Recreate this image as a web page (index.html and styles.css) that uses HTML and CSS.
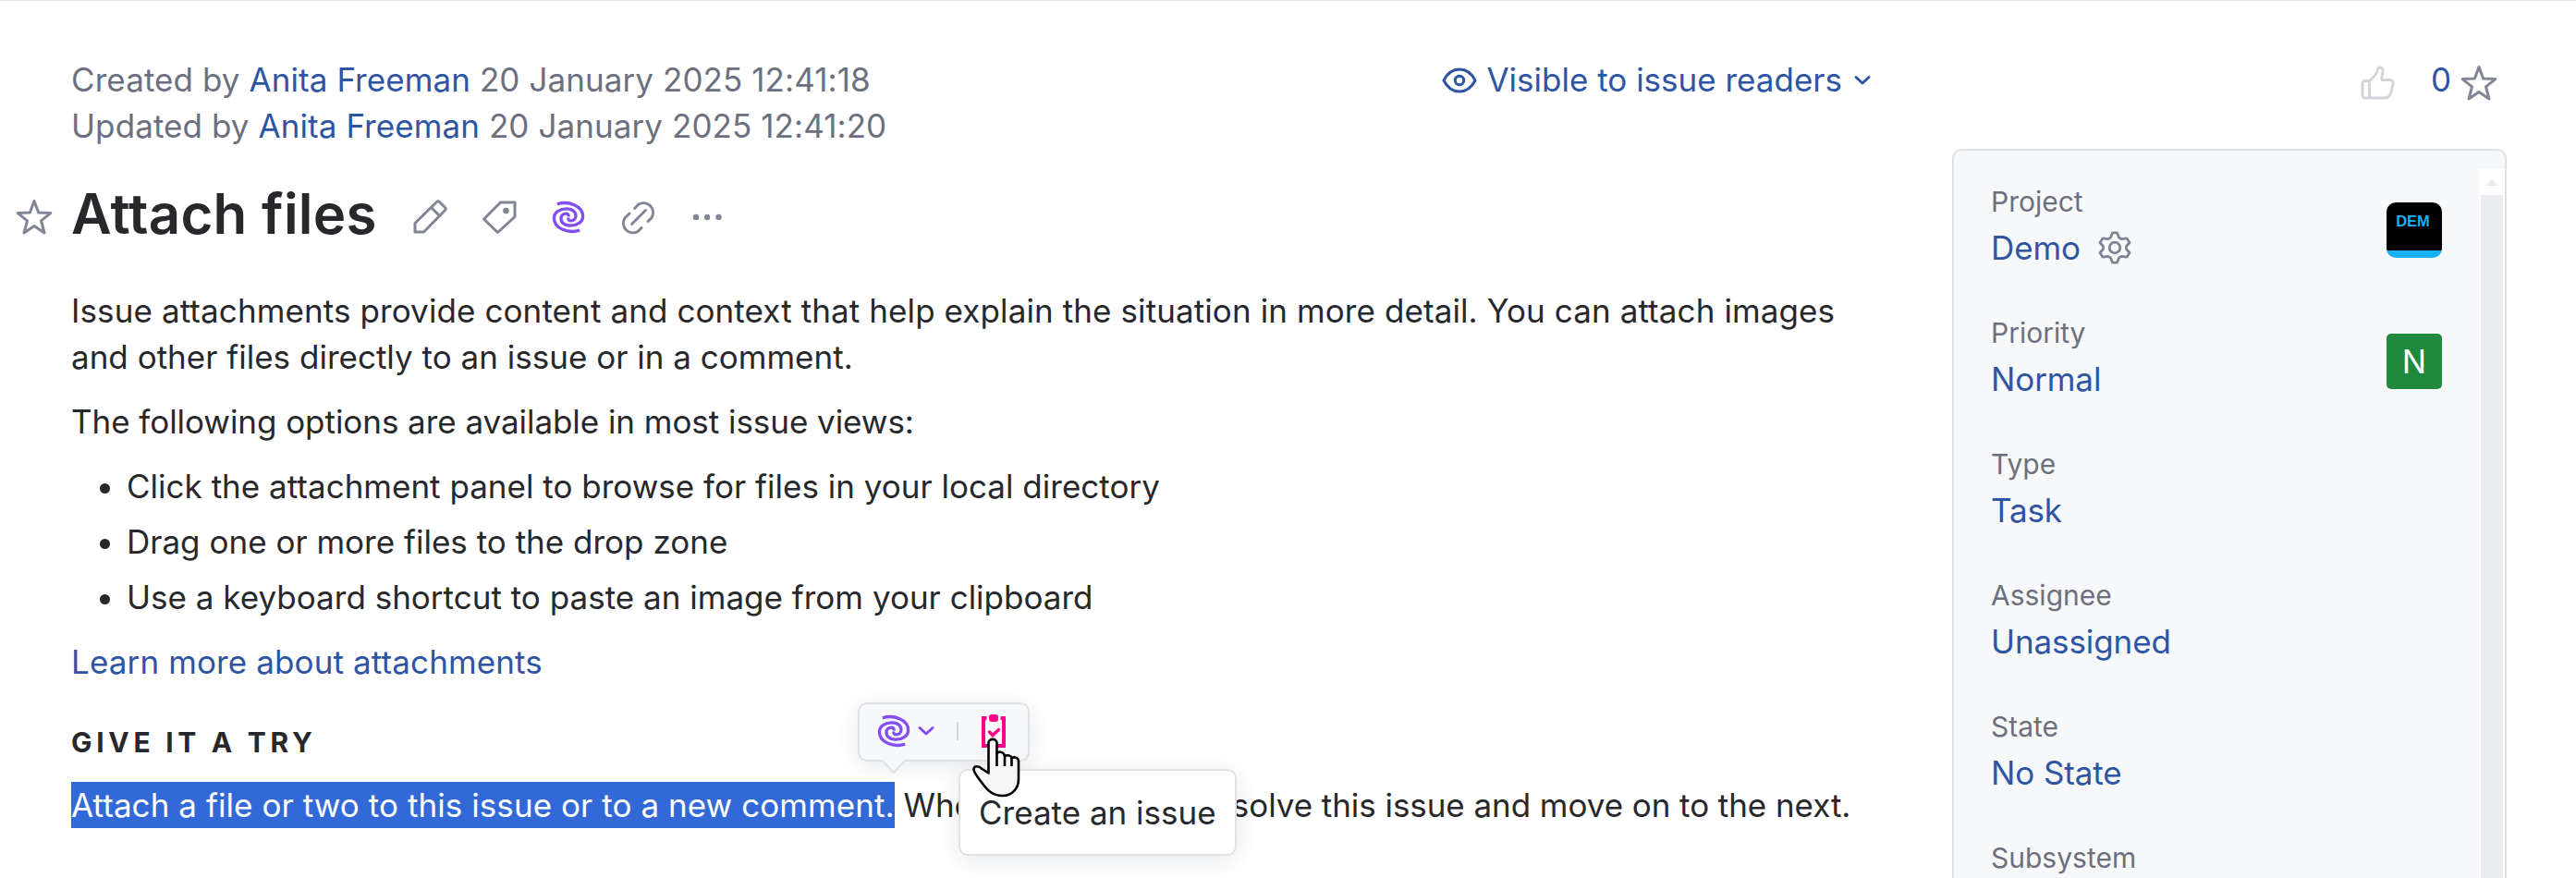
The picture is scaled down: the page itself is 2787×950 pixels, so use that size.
FILE: index.html
```html
<!DOCTYPE html>
<html lang="en">
<head>
    <meta charset="UTF-8">
    <meta name="viewport" content="width=device-width, initial-scale=1.0">
    <title>Attach files</title>
    <link rel="stylesheet" href="styles.css">
</head>
<body>

<!-- Shared icons -->
<svg width="0" height="0" class="sprite">
    <symbol id="icon-star" viewBox="0 0 40 40">
        <path d="M20 2.5 L24.6 15 L37.8 15.6 L27.5 23.8 L31 37 L20 29.6 L9 37 L12.5 23.8 L2.2 15.6 L15.4 15 Z" fill="none" stroke="currentColor" stroke-width="3" stroke-linejoin="round"/>
    </symbol>
    <symbol id="icon-swirl" viewBox="0 0 40 40">
        <g fill="none" stroke="currentColor" stroke-width="3.3">
            <path id="swirl-arm" d="M7.800 5.800 C20 2 35.600 7.500 35.600 19 C35.600 26 28.500 29.200 22 29.200 C15.500 29.200 12 25.500 12 21.500 C12 18 14.500 16.200 17.500 16.200 C19.500 16.200 20.500 17.200 20 19.500"/>
            <use href="#swirl-arm" transform="rotate(180 20 20)"/>
        </g>
    </symbol>
    <symbol id="icon-chevron" viewBox="0 0 20 14">
        <path d="M3 3.500 L10 10 L17 3.500" fill="none" stroke="currentColor" stroke-width="3" stroke-linecap="round" stroke-linejoin="round"/>
    </symbol>
</svg>

<div class="page">
    <main class="issue">
        <header class="meta">
            <div class="authors">
                <p>Created by <a href="#">Anita Freeman</a> 20 January 2025 12:41:18</p>
                <p>Updated by <a href="#">Anita Freeman</a> 20 January 2025 12:41:20</p>
            </div>
            <a href="#" class="visibility">
                <svg class="icon-eye" viewBox="0 0 38 28" fill="none" stroke="currentColor" stroke-width="3">
                    <path d="M2 14 C10 -2 28 -2 36 14 C28 30 10 30 2 14 Z" stroke-linejoin="round"/>
                    <circle cx="19" cy="14" r="4.700"/>
                </svg>
                <span>Visible to issue readers</span>
                <svg class="icon-chevron"><use href="#icon-chevron"/></svg>
            </a>
        </header>

        <div class="title-row">
            <svg class="icon star"><use href="#icon-star"/></svg>
            <h1>Attach files</h1>
            <div class="tools">
                <svg class="icon" viewBox="0 0 40 40" fill="none" stroke="currentColor" stroke-width="3" stroke-linejoin="round">
                    <path d="M4 36 V26.500 L27.500 3.500 Q29 2 30.500 3.500 L36.500 9.500 Q38 11 36.500 12.500 L13.500 36 Z M21.500 9.500 L30.500 18.500"/>
                </svg>
                <svg class="icon" viewBox="0 0 40 40" fill="none" stroke="currentColor" stroke-width="3" stroke-linejoin="round">
                    <path d="M21.500 4 H37 V19.500 L18.500 36.500 L3.500 22 Z"/>
                    <circle cx="27.500" cy="13" r="3.300" fill="currentColor" stroke="none"/>
                </svg>
                <svg class="icon purple"><use href="#icon-swirl"/></svg>
                <svg class="icon" viewBox="0 0 40 40" fill="none" stroke="currentColor" stroke-width="3" stroke-linecap="round">
                    <path d="M16.500 10.500 L21 6 A10.400 10.400 0 0 1 35 20.500 L31 24.500 M11 16 L6 21 A10.400 10.400 0 0 0 20 35.500 L24 31.500 M13.500 27.500 L28.500 12.500"/>
                </svg>
                <svg class="icon" viewBox="0 0 40 40" fill="currentColor">
                    <circle cx="8" cy="20" r="3.200"/>
                    <circle cx="20" cy="20" r="3.200"/>
                    <circle cx="32.500" cy="20" r="3.200"/>
                </svg>
            </div>
        </div>

        <article class="description">
            <p class="intro">Issue attachments provide content and context that help explain the situation in more detail. You can attach images<br><span class="intro-end">and other files directly to an issue or in a comment.</span></p>
            <p class="options">The following options are available in most issue views:</p>
            <ul>
                <li>Click the attachment panel to browse for files in your local directory</li>
                <li>Drag one or more files to the drop zone</li>
                <li>Use a keyboard shortcut to paste an image from your clipboard</li>
            </ul>
            <p class="more"><a href="#">Learn more about attachments</a></p>
            <h2>Give it a try</h2>
            <p class="try"><span class="selected">Attach a file or two to this issue or to a new comment.</span> When you're done, resolve this issue and move on to the next.</p>

            <div class="popup">
                <svg class="icon purple"><use href="#icon-swirl"/></svg>
                <svg class="icon-chevron purple"><use href="#icon-chevron"/></svg>
                <span class="divider"></span>
                <svg class="icon-task" viewBox="0 0 26 36">
                    <path d="M5.500 4 H2 V34 H24 V4 H20.500" fill="none" stroke="currentColor" stroke-width="4"/>
                    <rect x="8" y="0" width="10" height="8" rx="3" fill="currentColor"/>
                    <path d="M8.500 19 L12 22.500 L18.500 16.500" fill="none" stroke="currentColor" stroke-width="3.500" stroke-linecap="round"/>
                </svg>
                <svg class="popup-tail" viewBox="0 0 28 16">
                    <path d="M1 0 L14 14 L27 0" fill="#f7f8fa" stroke="#dfe1e5" stroke-width="2"/>
                </svg>
            </div>
            <div class="tooltip">Create an issue</div>
            <svg class="cursor" viewBox="0 0 52 66">
                <path d="M17.500 39.500 V7 C17.500 1.500 26.500 1.500 26.500 7 V18 C29 15.500 34 16.500 35 21 C38 19.500 42 20.500 42.500 23 C46 21.500 50 23 50 27 V46 C50 57 42 64 33 64 C20 64 15 56 10 49.500 C7 45.500 1.500 39 1.500 35.500 C1.500 31 7 31.500 10.500 35 Z" fill="#f7f7f7" stroke="#000" stroke-width="2.600" stroke-linejoin="round"/>
                <path d="M26.500 17 V32 M35 21 V32 M42.500 23 V32" stroke="#000" stroke-width="2.600"/>
            </svg>
        </article>
    </main>

    <aside class="side">
        <div class="votes">
            <svg class="icon thumb" viewBox="0 0 40 40" fill="none" stroke="currentColor" stroke-width="3" stroke-linejoin="round">
                <path d="M11.500 17.500 H7 Q4 17.500 4 20.500 V33 Q4 36 7 36 H28 Q33 36 34.500 31 L37 21 Q38 16.500 33.500 16.500 H25 Q24.500 14.500 26 8 Q26.500 3 23 3 Q21 3 20.500 5 Q19 11.500 11.500 17.500 Z M11.500 17.500 V36"/>
            </svg>
            <a href="#">0</a>
            <svg class="icon star"><use href="#icon-star"/></svg>
        </div>

        <div class="fields">
            <div class="field-list">
                <div class="field">
                    <div>
                        <span class="label">Project</span>
                        <div class="value">
                            <a href="#">Demo</a>
                            <svg class="icon-gear" viewBox="0 0 36 36" fill="none" stroke="currentColor" stroke-width="2.800" stroke-linejoin="round">
                                <path d="M15.500 1.800 H20.500 L22.500 7 L25.500 8.700 L31 7.800 L34 12.500 L30.500 16.500 V19.500 L34 23.500 L31 28.200 L25.500 27.300 L22.500 29 L20.500 34.200 H15.500 L13.500 29 L10.500 27.300 L5 28.200 L2 23.500 L5.500 19.500 V16.500 L2 12.500 L5 7.800 L10.500 8.700 L13.500 7 Z"/>
                                <circle cx="18" cy="18" r="5.800"/>
                            </svg>
                        </div>
                    </div>
                    <span class="project-logo">DEM</span>
                </div>
                <div class="field">
                    <div>
                        <span class="label">Priority</span>
                        <div class="value"><a href="#">Normal</a></div>
                    </div>
                    <span class="priority">N</span>
                </div>
                <div class="field">
                    <div>
                        <span class="label">Type</span>
                        <div class="value"><a href="#">Task</a></div>
                    </div>
                </div>
                <div class="field">
                    <div>
                        <span class="label">Assignee</span>
                        <div class="value"><a href="#">Unassigned</a></div>
                    </div>
                </div>
                <div class="field">
                    <div>
                        <span class="label">State</span>
                        <div class="value"><a href="#">No State</a></div>
                    </div>
                </div>
                <div class="field">
                    <span class="label">Subsystem</span>
                </div>
            </div>
            <div class="scrollbar">
                <div class="scroll-up"></div>
                <div class="track"></div>
            </div>
        </div>
    </aside>
</div>

</body>
</html>
```
FILE: styles.css
```css
:root {
    --text-color: #27282c;
    --secondary-color: #6c707e;
    --link-color: #2e55a3;
    --icon-color: #818594;
    --line-color: #dfe1e5;
    --side-color: #f7f8fa;
    --purple: #834df0;
}

* {
    margin: 0;
    padding: 0;
    box-sizing: border-box;
}

body {
    height: 950px;
    overflow: hidden;
    border-top: 1px solid var(--line-color);
    background: #fff;
    font-family: Inter, "Liberation Sans", sans-serif;
    font-size: 35px;
    line-height: 50px;
    color: var(--text-color);
}

a {
    color: var(--link-color);
    text-decoration: none;
}

svg {
    display: block;
    flex: none;
}

.sprite {
    position: absolute;
}

.icon {
    width: 40px;
    height: 40px;
    color: var(--icon-color);
}

.icon-chevron {
    width: 20px;
    height: 14px;
}

.purple {
    color: var(--purple);
}

.page {
    display: flex;
    height: 949px;
    overflow: hidden;
}

.issue {
    width: 2112px;
    padding: 60px 87px 0 77px;
}

.meta {
    display: flex;
    justify-content: space-between;
    color: var(--secondary-color);
}

.authors {
    letter-spacing: 0.08px;
}

.visibility {
    display: flex;
    align-items: center;
    height: 50px;
}

.visibility svg {
    margin-top: 2px;
}

.icon-eye {
    width: 38px;
    height: 28px;
    margin-right: 10px;
}

.visibility .icon-chevron {
    margin-left: 12px;
}

.title-row {
    display: flex;
    align-items: center;
    height: 70px;
    margin: 35px 0 0 -60px;
}

.title-row svg {
    margin-top: 8px;
}

h1 {
    margin-left: 20px;
    font-size: 60px;
    font-weight: 600;
    line-height: 70px;
    letter-spacing: 0.25px;
}

.tools {
    display: flex;
    gap: 35px;
    margin-left: 37px;
}

.description {
    position: relative;
    margin-top: 45px;
}

.description p {
    margin-bottom: 20px;
    white-space: nowrap;
}

.intro {
    letter-spacing: 0.1px;
}

.intro-end {
    letter-spacing: 0.01px;
}

.options {
    letter-spacing: -0.05px;
}

.more {
    letter-spacing: 0.12px;
}

.description ul {
    margin-bottom: 20px;
    padding-left: 60px;
}

.description li {
    margin-bottom: 10px;
    letter-spacing: 0.01px;
}

h2 {
    margin: 37px 0 18px;
    font-size: 30px;
    font-weight: 700;
    line-height: 50px;
    letter-spacing: 4.7px;
    text-transform: uppercase;
}

.try {
    letter-spacing: -0.06px;
}

.selected {
    display: inline-block;
    background: #3369d6;
    color: #fff;
    letter-spacing: 0.07px;
}

/* Selection popup */
.popup {
    position: absolute;
    left: 851px;
    top: 449px;
    display: flex;
    align-items: center;
    width: 186px;
    height: 64px;
    padding: 0 0 2px 17px;
    border: 2px solid var(--line-color);
    border-radius: 10px;
    background: var(--side-color);
    box-shadow: 0 5px 25px rgba(0, 28, 54, 0.1);
}

.popup .icon-chevron {
    margin-left: 5px;
}

.divider {
    width: 2px;
    height: 20px;
    margin: 0 25px 0 23px;
    background: #d3d5db;
}

.icon-task {
    width: 26px;
    height: 36px;
    color: #ff008c;
}

.popup-tail {
    position: absolute;
    left: 23px;
    top: 60px;
    width: 28px;
    height: 16px;
}

.tooltip {
    position: absolute;
    left: 960px;
    top: 521px;
    width: 301px;
    height: 94px;
    padding: 20px;
    border: 2px solid var(--line-color);
    border-radius: 10px;
    background: #fff;
    box-shadow: 0 5px 25px rgba(0, 28, 54, 0.1);
    white-space: nowrap;
}

.cursor {
    position: absolute;
    left: 975px;
    top: 486px;
    width: 52px;
    height: 66px;
}

/* Right column */
.side {
    width: 600px;
}

.votes {
    display: flex;
    align-items: center;
    justify-content: flex-end;
    height: 50px;
    margin-top: 60px;
    padding-right: 10px;
}

.votes svg {
    margin-top: 7px;
}

.votes .thumb {
    margin-right: 38px;
    color: #d3d5db;
}

.votes .star {
    margin-left: 10px;
}

.fields {
    display: flex;
    height: 800px;
    margin-top: 50px;
    border: 2px solid var(--line-color);
    border-radius: 10px;
    background: var(--side-color);
}

.field-list {
    flex: 1;
    padding: 30px 40px 0;
}

.field {
    display: flex;
    align-items: flex-start;
    justify-content: space-between;
    height: 102px;
    margin-bottom: 40px;
}

.label {
    display: block;
    height: 50px;
    font-size: 30px;
    color: var(--secondary-color);
}

.value {
    display: flex;
    align-items: center;
    height: 50px;
    letter-spacing: -0.1px;
}

.icon-gear {
    width: 36px;
    height: 36px;
    margin-left: 19px;
    color: var(--icon-color);
}

.project-logo,
.priority {
    width: 60px;
    height: 60px;
    margin-top: 26px;
    text-align: center;
}

.project-logo {
    padding: 9px 3px 0 0;
    border-radius: 10px;
    background: linear-gradient(#000 52px, #18b0f3 52px);
    color: #18b0f3;
    font: bold 16.5px/22px "Liberation Sans", Arial, sans-serif;
}

.priority {
    border-radius: 5px;
    background: #208a3c;
    color: #fff;
    line-height: 60px;
}

.scrollbar {
    display: flex;
    flex-direction: column;
    width: 28px;
    padding-top: 20px;
}

.scroll-up {
    display: flex;
    align-items: center;
    justify-content: center;
    height: 28px;
    background: #fff;
}

.scroll-up::before {
    content: "";
    border: 7px solid transparent;
    border-top: 0;
    border-bottom-color: #ebecf0;
}

.track {
    flex: 1;
    border: solid #fff;
    border-width: 0 2px;
    background: #ebecf0;
}
```
